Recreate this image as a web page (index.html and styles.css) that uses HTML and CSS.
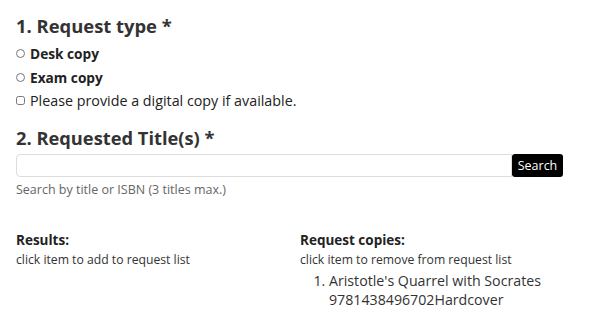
FILE: index.html
```html
<!DOCTYPE html>
<html>
<head>
<meta charset="utf-8">
<link rel="stylesheet" href="styles.css">
</head>
<body>
<form class="page">
  <h2 class="section-title">1. Request type *</h2>
  <label class="option bold"><input type="radio" name="type" class="radio"> Desk copy</label>
  <label class="option bold"><input type="radio" name="type" class="radio"> Exam copy</label>
  <label class="option"><input type="checkbox" class="check"> Please provide a digital copy if available.</label>

  <h2 class="section-title second">2. Requested Title(s) *</h2>
  <div class="search-row">
    <input type="text" class="search-input">
    <button type="button" class="search-btn">Search</button>
  </div>
  <p class="help">Search by title or ISBN (3 titles max.)</p>

  <div class="columns">
    <div class="col">
      <h4 class="col-title">Results:</h4>
      <p class="col-note">click item to add to request list</p>
    </div>
    <div class="col">
      <h4 class="col-title">Request copies:</h4>
      <p class="col-note">click item to remove from request list</p>
      <ol class="req-list">
        <li>Aristotle's Quarrel with Socrates<br>9781438496702Hardcover</li>
      </ol>
    </div>
  </div>
</form>
</body>
</html>
```
FILE: styles.css
```css
html, body { margin: 0; padding: 0; background: #fff; }
body {
  font-family: "Open Sans", "Noto Sans", sans-serif;
  color: #333;
}
.page { padding: 13px 16px 0 16px; }
.section-title {
  margin: 0 0 3px 0;
  font-size: 18.4px;
  font-weight: 700;
  line-height: 26px;
  color: #333;
}
.section-title.second { margin-top: 12px; margin-bottom: 3px; font-size: 18.3px; }
.option {
  display: flex;
  align-items: center;
  gap: 5px;
  font-size: 14.3px;
  line-height: 23.5px;
  color: #222;
}
.option.bold { font-weight: 700; font-size: 13.7px; }
.radio, .check { margin: 0; width: 9px; height: 9px; }
.search-row { display: flex; width: 547px; }
.search-input {
  flex: 1;
  height: 23px;
  box-sizing: border-box;
  border: 1px solid #ddd;
  border-radius: 4px 0 0 4px;
  margin: 0;
}
.search-btn {
  height: 23px;
  width: 51px;
  background: #000;
  color: #fff;
  border: none;
  border-radius: 3px;
  font-family: inherit;
  font-size: 12.5px;
  padding: 0;
  margin: 0;
}
.help { margin: 5px 0 0 0; font-size: 12.5px; color: #666; line-height: 16px; }
.columns { display: grid; grid-template-columns: 1fr 1fr; margin-top: 33px; }
.col-title { margin: 0; font-size: 13.5px; font-weight: 700; line-height: 18px; color: #222; }
.col-note { margin: 2px 0 0 0; font-size: 12.2px; line-height: 18px; color: #333; }
.req-list { margin: 2px 0 0 0; padding-left: 29px; font-size: 14.2px; line-height: 19px; color: #333; }
```
